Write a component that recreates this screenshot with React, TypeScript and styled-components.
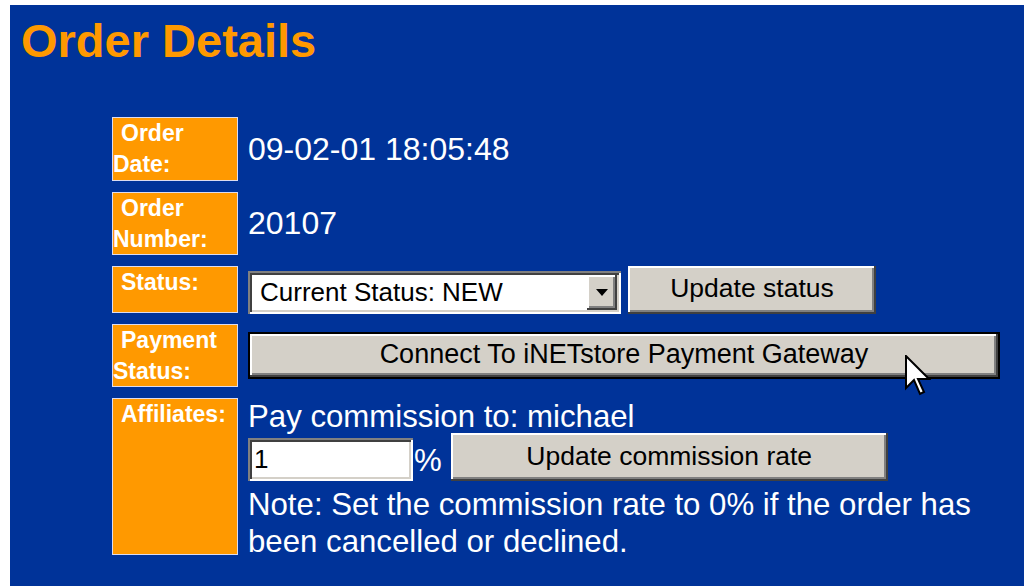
import React from "react";
import styled, { createGlobalStyle } from "styled-components";

const GlobalStyle = createGlobalStyle`
  html, body {
    margin: 0;
    padding: 0;
    background: #ffffff;
    overflow: hidden;
  }

  body {
    padding: 5px 0 0 10px;
    font-family: "Liberation Sans", Arial, sans-serif;
  }
`;

const Page = styled.div`
  height: 581px;
  background: #003399;
  padding: 9px 0 0 11px;
  box-sizing: border-box;
  color: #ffffff;
`;

const Title = styled.h1`
  margin: 0;
  font-size: 47px;
  line-height: 54px;
  font-weight: bold;
  color: #ff9900;
`;

const DetailsGrid = styled.div`
  display: grid;
  grid-template-columns: 126px auto;
  grid-template-rows: 64px 63px 47px 63px 157px;
  column-gap: 10px;
  row-gap: 11px;
  margin: 49px 0 0 91px;
`;

const Label = styled.div`
  background: #ff9900;
  border: 1px solid #dcdcf0;
  font-size: 23px;
  line-height: 31px;
  font-weight: bold;
  color: #ffffff;
  text-indent: 8px;
  overflow: hidden;
`;

const Value = styled.div<{ $top?: boolean }>`
  position: relative;
  display: flex;
  flex-direction: ${(p) => (p.$top ? "column" : "row")};
  align-items: ${(p) => (p.$top ? "flex-start" : "flex-end")};
  align-self: ${(p) => (p.$top ? "start" : "center")};
  font-size: ${(p) => (p.$top ? 31.2 : 32)}px;
  line-height: 37px;
  color: #ffffff;
`;

const bevel = `
  box-shadow: inset -2px -2px #404040, inset 2px 2px #ffffff,
    inset -4px -4px #808080;
`;

const sunken = `
  box-shadow: inset 2px 2px #808080, inset -2px -2px #ffffff,
    inset 4px 4px #404040, inset -4px -4px #d4d0c8;
`;

const Button = styled.button<{ $width: number; $height: number; $default?: boolean }>`
  width: ${(p) => p.$width}px;
  height: ${(p) => p.$height}px;
  padding: 0 0 2px;
  margin: 0;
  border: ${(p) => (p.$default ? "2px solid #000000" : "none")};
  background: #d4d0c8;
  ${bevel}
  font-family: "Liberation Sans", Arial, sans-serif;
  font-size: ${(p) => (p.$default ? 27 : 26.5)}px;
  color: #000000;
  box-sizing: border-box;
`;

const SelectBox = styled.div`
  display: flex;
  align-items: stretch;
  width: 373px;
  height: 43px;
  margin-right: 7px;
  padding: 4px;
  box-sizing: border-box;
  background: #ffffff;
  ${sunken}
`;

const SelectText = styled.span`
  flex: 1;
  padding-left: 8px;
  font-size: 26px;
  line-height: 35px;
  color: #000000;
`;

const ArrowButton = styled.span`
  display: flex;
  align-items: center;
  justify-content: center;
  width: 30px;
  background: #d4d0c8;
  ${bevel}
`;

const TextField = styled.div`
  width: 165px;
  height: 43px;
  padding: 4px 6px;
  box-sizing: border-box;
  background: #ffffff;
  ${sunken}
  font-size: 26px;
  line-height: 35px;
  color: #000000;
`;

const RateRow = styled.div`
  display: flex;
  align-items: flex-end;
  margin-top: -2px;
`;

const Percent = styled.span`
  margin: 0 9px 0 1px;
  line-height: 40px;
`;

const Note = styled.div`
  margin-top: 5px;
  width: 770px;
`;

const Pointer = styled.svg`
  position: absolute;
  left: 657px;
  top: 23px;
`;

const DropArrow = () => (
  <svg width="12" height="7" viewBox="0 0 12 7">
    <path d="M0 0h12L6 7z" fill="#000" />
  </svg>
);

const MousePointer = () => (
  <Pointer width="26" height="42" viewBox="0 0 13 21">
    <path
      d="M0.5 0.5v16l4-4 3 7 2-1-3-6.5h5.5z"
      fill="#fff"
      stroke="#000"
      strokeWidth="1"
      strokeLinejoin="miter"
    />
  </Pointer>
);

export default function App() {
  return (
    <>
      <GlobalStyle />
      <Page>
        <Title>Order Details</Title>
        <DetailsGrid>
          <Label>
            Order
            <br />
            Date:
          </Label>
          <Value>09-02-01 18:05:48</Value>

          <Label>
            Order
            <br />
            Number:
          </Label>
          <Value>20107</Value>

          <Label>Status:</Label>
          <Value>
            <SelectBox>
              <SelectText>Current Status: NEW</SelectText>
              <ArrowButton>
                <DropArrow />
              </ArrowButton>
            </SelectBox>
            <Button $width={248} $height={48}>
              Update status
            </Button>
          </Value>

          <Label>
            Payment
            <br />
            Status:
          </Label>
          <Value>
            <Button $width={752} $height={47} $default>
              Connect To iNETstore Payment Gateway
            </Button>
            <MousePointer />
          </Value>

          <Label>Affiliates:</Label>
          <Value $top>
            <span>Pay commission to: michael</span>
            <RateRow>
              <TextField>1</TextField>
              <Percent>%</Percent>
              <Button $width={437} $height={48}>
                Update commission rate
              </Button>
            </RateRow>
            <Note>
              Note: Set the commission rate to 0% if the order has
              <br />
              been cancelled or declined.
            </Note>
          </Value>
        </DetailsGrid>
      </Page>
    </>
  );
}
